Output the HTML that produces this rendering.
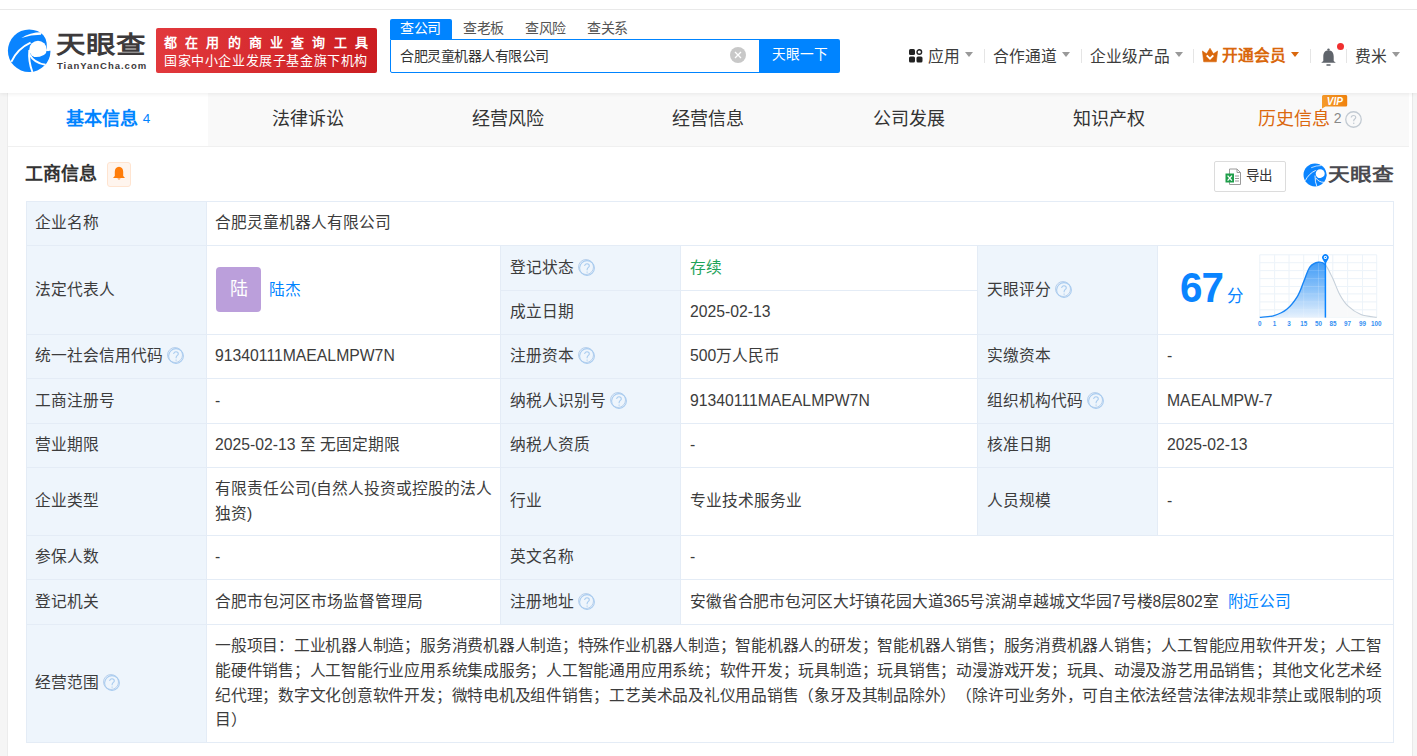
<!DOCTYPE html>
<html lang="zh-CN"><head><meta charset="utf-8">
<style>
*{margin:0;padding:0;box-sizing:border-box}
html,body{width:1417px;height:756px;overflow:hidden;background:#f5f5f5;font-family:"Liberation Sans",sans-serif;color:#333}
.abs{position:absolute}
#top{position:absolute;left:0;top:0;width:1417px;height:10px;background:#fff;border-bottom:1px solid #e9e9e9;z-index:3}
#hdr{position:absolute;left:0;top:10px;width:1417px;height:83px;background:#fff;box-shadow:0 1px 4px rgba(0,0,0,.07);z-index:2}
#card{position:absolute;left:8px;top:93px;width:1404px;height:663px;background:#fff}
#rstrip{position:absolute;left:1412px;top:93px;width:1px;height:663px;background:#e9e9e9}
.tabs{position:absolute;left:0;top:0;width:1401px;height:53px;background:#f9f9f9}
.tab{position:absolute;top:0;height:53px;width:200.14px;text-align:center;font-size:18px;line-height:53px;color:#333}
.tab.on{background:#fff;color:#0084ff;font-weight:bold}
table{position:absolute;left:18px;top:108px;border-collapse:collapse;table-layout:fixed;width:1368px}
td{border:1px solid #e4ecf6;font-size:15.75px;padding:0 10px;vertical-align:middle;color:#333;line-height:24.75px}
td.l{background:#eef5fc}
.q{display:inline-block;width:16px;height:16px;border:1.3px solid #b8d0ec;border-radius:50%;color:#b8d0ec;font-size:12px;line-height:13px;text-align:center;vertical-align:-2px;margin-left:6px;font-family:"Liberation Sans",sans-serif}
.tri{display:inline-block;width:0;height:0;border-left:4.5px solid transparent;border-right:4.5px solid transparent;border-top:5px solid #999;vertical-align:4.5px;margin-left:4.5px}
.nav{position:absolute;top:45px;font-size:15.75px;line-height:20px;color:#3c3c3c;white-space:nowrap}
.div{position:absolute;top:49px;width:1px;height:14px;background:#e5e5e5}
.cell{position:absolute;border:1px solid #e4ecf6;display:flex;align-items:center;padding-left:8px;font-size:15.75px;line-height:24.75px;color:#3c3c3c;white-space:nowrap;text-spacing-trim:space-all}
.cell.l{background:#eef5fc}
.q{display:inline-block;width:16px;height:16px;margin-left:4px;position:relative;top:-1.5px}
.q svg{display:block}
.av{display:inline-block;position:relative;top:-1px;margin-left:1px;width:45px;height:45px;border-radius:4px;background:#bb9fdb;color:#fff;font-size:18px;line-height:45px;text-align:center}
</style></head><body>
<div id="top"></div>
<div id="hdr">
  <!-- logo -->
  <svg class="abs" style="left:5px;top:17px" width="48" height="48" viewBox="0 0 48 48">
    <circle cx="24.2" cy="23.8" r="21.3" fill="#0a84ff"/>
    <circle cx="33" cy="22.4" r="8.7" fill="#fff"/>
    <path d="M34.5,4.6 A22.2,22.2 0 0 1 46.8,22.6 L46,24.3 L41,24 L41.8,21.6 Q42.8,10.5 34.5,4.6Z" fill="#fff"/>
    <path d="M27,29.5 Q36,32.2 45.2,23.2 Q45.3,32 40.2,35 Q32,37.5 27,29.5Z" fill="#0a84ff"/>
    <path d="M6.3,34.8 Q12.5,21.5 25.6,15.6" stroke="#fff" stroke-width="1.9" fill="none"/>
    <path d="M16.3,10.9 Q25,5.2 36.5,5.2 L36,7.8 Q26,7.9 16.3,10.9Z" fill="#fff"/>
    <path d="M24.3,23 Q23.2,34 27.4,45" stroke="#fff" stroke-width="1.9" fill="none"/>
    <path d="M24.6,27.5 Q29,36 40.5,37.8" stroke="#fff" stroke-width="1.9" fill="none"/>
  </svg>
  <div class="abs" style="left:56px;top:16px;font-size:29px;line-height:32px;font-weight:bold;color:#3d3a3b;letter-spacing:0.6px;transform-origin:0 29px;transform:scale(1.02,0.83)">天眼查</div>
  <div class="abs" style="left:57px;top:50px;font-size:9.5px;line-height:10px;font-weight:bold;color:#3d3a3b;letter-spacing:0.98px;top:50.5px">TianYanCha.com</div>
  <!-- red banner -->
  <div class="abs" style="left:156px;top:18px;width:221px;height:44.5px;border-radius:2px;background:linear-gradient(90deg,#e2393d,#cb1d21)"></div>
  <div class="abs" style="left:164px;top:25px;font-size:13px;line-height:16px;color:#fff;font-weight:bold;letter-spacing:8.2px;white-space:nowrap">都在用的商业查询工具</div>
  <div class="abs" style="left:164px;top:43px;font-size:13px;line-height:16px;color:#fff;letter-spacing:0.6px;white-space:nowrap">国家中小企业发展子基金旗下机构</div>
  <!-- search -->
  <div class="abs" style="left:390px;top:9px;width:62px;height:20px;background:#0084ff;border-radius:2px 2px 0 0"></div>
  <div class="abs" style="left:400px;top:9px;font-size:14px;letter-spacing:-0.5px;line-height:18px;color:#fff">查公司</div>
  <div class="abs" style="left:463px;top:9px;font-size:14px;letter-spacing:-0.5px;line-height:18px;color:#555">查老板</div>
  <div class="abs" style="left:525px;top:9px;font-size:14px;letter-spacing:-0.5px;line-height:18px;color:#555">查风险</div>
  <div class="abs" style="left:587px;top:9px;font-size:14px;letter-spacing:-0.5px;line-height:18px;color:#555">查关系</div>
  <div class="abs" style="left:390px;top:29px;width:372px;height:33.5px;border:1px solid #0084ff;border-radius:0 0 0 2px;background:#fff"></div>
  <div class="abs" style="left:400px;top:36px;font-size:14px;letter-spacing:-0.5px;line-height:20px;color:#333">合肥灵童机器人有限公司</div>
  <div class="abs" style="left:730px;top:37px;width:16px;height:16px;border-radius:50%;background:#c8c8c8"></div>
  <svg class="abs" style="left:730px;top:37px" width="16" height="16" viewBox="0 0 16 16"><path d="M5,5L11,11M11,5L5,11" stroke="#fff" stroke-width="1.3"/></svg>
  <div class="abs" style="left:759px;top:29px;width:81px;height:33.5px;background:#0084ff;border-radius:0 2px 2px 0"></div>
  <div class="abs" style="left:772px;top:35px;font-size:13.7px;line-height:20px;color:#fff">天眼一下</div>
  <!-- right nav -->
  <svg class="abs" style="left:909px;top:39px" width="14" height="14" viewBox="0 0 14 14">
    <rect x="0" y="0" width="6" height="6" rx="1.5" fill="#222"/>
    <circle cx="10.3" cy="3" r="2.3" fill="none" stroke="#222" stroke-width="1.4"/>
    <rect x="0" y="7.5" width="6" height="6" rx="1.5" fill="#222"/>
    <rect x="7.5" y="7.5" width="6" height="6" rx="1.5" fill="#222"/>
  </svg>
  <div class="nav" style="left:928px;top:36.5px">应用<span class="tri"></span></div>
  <div class="div" style="left:984px;top:39px"></div>
  <div class="nav" style="left:993px;top:36.5px">合作通道<span class="tri"></span></div>
  <div class="div" style="left:1081px;top:39px"></div>
  <div class="nav" style="left:1090px;top:36.5px">企业级产品<span class="tri"></span></div>
  <div class="div" style="left:1193px;top:39px"></div>
  <svg class="abs" style="left:1202px;top:38px;z-index:1" width="16" height="15" viewBox="0 0 16 15">
    <path d="M0.4,3 L4.6,5.8 L8,0.3 L11.4,5.8 L15.6,3 L14.3,13.8 L1.7,13.8Z" fill="#d9670c" stroke="#d9670c" stroke-width="0.6" stroke-linejoin="round"/>
    <path d="M4.7,7.3 L8,10.7 L11.3,7.3" stroke="#fff" stroke-width="1.9" fill="none"/>
  </svg>
  <div class="nav" style="left:1222px;top:35.5px;color:#d9670c;font-weight:bold">开通会员<span class="tri" style="border-top-color:#d9670c;vertical-align:3.8px"></span></div>
  <div class="div" style="left:1310px;top:39px"></div>
  <svg class="abs" style="left:1320px;top:38px" width="17" height="19" viewBox="0 0 17 19">
    <circle cx="8.5" cy="1.6" r="1.2" fill="#5f646b"/>
    <path d="M8.5,2.2 C5,2.2 3.3,5 3.3,8.5 L3.3,13 L1.2,14.8 L15.8,14.8 L13.7,13 L13.7,8.5 C13.7,5 12,2.2 8.5,2.2Z" fill="#5f646b"/>
    <rect x="6.3" y="16.3" width="4.4" height="1.4" rx=".6" fill="#5f646b"/>
  </svg>
  <div class="abs" style="left:1337px;top:32.5px;width:7px;height:7px;border-radius:50%;background:#f02f2f"></div>
  <div class="div" style="left:1346px;top:39px"></div>
  <div class="nav" style="left:1355px;top:36.5px">费米<span class="tri"></span></div>
</div>

<div id="card">
  <div class="abs" style="left:0;top:53px;width:1401px;height:1px;background:#f0f0f0"></div>
  <div class="tabs">
    <div class="tab on" style="left:0">基本信息 <span style="font-weight:normal;font-size:13.5px;position:relative;top:-2px">4</span></div>
    <div class="tab" style="left:200.14px">法律诉讼</div>
    <div class="tab" style="left:400.28px">经营风险</div>
    <div class="tab" style="left:600.42px">经营信息</div>
    <div class="tab" style="left:800.56px">公司发展</div>
    <div class="tab" style="left:1000.70px">知识产权</div>
    <div class="tab" style="left:1200.84px;color:#db680e;text-align:left;padding-left:49px">历史信息<span style="font-size:14px;color:#888;margin-left:4px;position:relative;top:-2px">2</span></div>
  </div>
</div>
<div id="rstrip"></div>
<div class="abs" style="left:7px;top:93px;width:1px;height:663px;background:#ececec"></div>
<svg class="abs" style="left:1345px;top:111px;z-index:3" width="17" height="17" viewBox="0 0 16 16"><circle cx="8" cy="8" r="7.3" fill="none" stroke="#c2cad2" stroke-width="1.2"/><path d="M5.9,6.2 C5.9,4.9 6.8,4.2 8,4.2 C9.2,4.2 10.1,5 10.1,6.1 C10.1,7.4 8.2,7.6 8.2,9.1 L8.2,9.7" fill="none" stroke="#c2cad2" stroke-width="1.1"/><circle cx="8.2" cy="11.6" r=".75" fill="#c2cad2"/></svg>

<!-- section heading -->
<div class="abs" style="left:25px;top:162px;font-size:18px;line-height:24px;font-weight:bold;color:#333">工商信息</div>
<div class="abs" style="left:107px;top:162px;width:24px;height:25px;border:1px solid #ffe4d0;border-radius:3px;background:#fff5ee"></div>
<svg class="abs" style="left:112px;top:166px" width="14" height="15" viewBox="0 0 14 15">
  <path d="M7,0.8 C4.3,0.8 2.8,3 2.8,5.8 L2.8,10 L1,12 L13,12 L11.2,10 L11.2,5.8 C11.2,3 9.7,0.8 7,0.8Z" fill="#ff7d0a"/>
  <path d="M5.3,12.5 Q7,14.6 8.7,12.5Z" fill="#ff7d0a"/>
</svg>
<!-- export -->
<div class="abs" style="left:1214px;top:161px;width:72px;height:31px;border:1px solid #dcdcdc;border-radius:2px;background:#fff"></div>
<svg class="abs" style="left:1225px;top:168px" width="17" height="18" viewBox="0 0 17 18">
  <path d="M4.5,1 L12,1 L15.5,4.5 L15.5,16.5 L4.5,16.5Z" fill="#fff" stroke="#9a9a9a" stroke-width="1"/>
  <path d="M12,1 L12,4.5 L15.5,4.5" fill="none" stroke="#9a9a9a" stroke-width="1"/>
  <path d="M10,8 L14,8 M10,10.5 L14,10.5 M10,13 L14,13" stroke="#9a9a9a" stroke-width="1"/>
  <rect x="0.5" y="5.5" width="8.5" height="9" fill="#1e9e4a"/>
  <path d="M2.6,7.6 L6.9,12.6 M6.9,7.6 L2.6,12.6" stroke="#fff" stroke-width="1.3"/>
</svg>
<div class="abs" style="left:1246px;top:166px;font-size:13.5px;line-height:20px;color:#333">导出</div>
<!-- small logo -->
<svg class="abs" style="left:1302px;top:161.5px" width="26" height="26" viewBox="0 0 48 48">
    <circle cx="24" cy="23.8" r="21.2" fill="#0a84ff"/>
    <circle cx="33.6" cy="21.6" r="8.3" fill="#fff"/>
    <path d="M27.3,29.2 Q35.5,31.5 44.8,22.5 L45.3,24 Q44,33 36,35.5 Q30,35.5 27.3,29.2Z" fill="#0a84ff"/>
    <path d="M6,34.6 Q12.7,21 25.4,15.5" stroke="#fff" stroke-width="1.6" fill="none"/>
    <path d="M17,10.5 Q26,6.5 35.5,6.5" stroke="#fff" stroke-width="1.3" fill="none"/>
    <path d="M24,25 Q24,38 27.5,45" stroke="#fff" stroke-width="1.6" fill="none"/>
    <path d="M25.5,29.5 Q31,37.5 40.5,37.5" stroke="#fff" stroke-width="1.6" fill="none"/>
</svg>
<div class="abs" style="left:1328px;top:158px;font-size:21.5px;line-height:30px;font-weight:bold;color:#4a4a4f;transform-origin:0 25px;transform:scale(1.01,0.82)">天眼查</div>
<!-- VIP badge -->
<svg class="abs" style="left:1321px;top:94px" width="27" height="15" viewBox="0 0 27 15">
  <defs><linearGradient id="vg" x1="0" y1="0" x2="1" y2="0"><stop offset="0" stop-color="#f59a2a"/><stop offset="1" stop-color="#f0820e"/></linearGradient></defs>
  <path d="M2.5,1 L25,1 Q26.2,1 26.2,2.5 L26.2,11 Q26.2,12.5 25,12.5 L4.5,12.5 L1,14.5 L1,2.5 Q1,1 2.5,1Z" fill="url(#vg)"/>
  <text x="13.8" y="10.6" text-anchor="middle" font-family="Liberation Sans" font-size="10" font-weight="bold" font-style="italic" fill="#fff">VIP</text>
</svg>
<div class="cell l" style="left:26px;top:201px;width:181px;height:45px">企业名称</div>
<div class="cell" style="left:206px;top:201px;width:1188px;height:45px">合肥灵童机器人有限公司</div>
<div class="cell l" style="left:26px;top:245px;width:181px;height:90px">法定代表人</div>
<div class="cell" style="left:206px;top:245px;width:295px;height:90px"><span class="av">陆</span><span style="color:#0084ff;margin-left:7.5px">陆杰</span></div>
<div class="cell l" style="left:500px;top:245px;width:181px;height:46px;padding-left:9px">登记状态<span class="q"><svg width="16" height="16" viewBox="0 0 16 16"><circle cx="8" cy="8" r="7.4" fill="none" stroke="#a8cbef" stroke-width="1.05"/><path d="M5.7,6.1 C5.7,4.6 6.8,3.8 8,3.8 C9.3,3.8 10.3,4.7 10.3,5.9 C10.3,7.3 8.1,7.7 8.1,9.5 L8.1,10.3" fill="none" stroke="#a8cbef" stroke-width="1.05"/><circle cx="8.1" cy="12.1" r=".7" fill="#a8cbef"/></svg></span></div>
<div class="cell" style="left:680px;top:245px;width:298px;height:46px;padding-left:9px"><span style="color:#1fa35a">存续</span></div>
<div class="cell l" style="left:500px;top:290px;width:181px;height:45px;padding-left:9px">成立日期</div>
<div class="cell" style="left:680px;top:290px;width:298px;height:45px;padding-left:9px">2025-02-13</div>
<div class="cell l" style="left:977px;top:245px;width:181px;height:90px;padding-left:9px">天眼评分<span class="q"><svg width="16" height="16" viewBox="0 0 16 16"><circle cx="8" cy="8" r="7.4" fill="none" stroke="#a8cbef" stroke-width="1.05"/><path d="M5.7,6.1 C5.7,4.6 6.8,3.8 8,3.8 C9.3,3.8 10.3,4.7 10.3,5.9 C10.3,7.3 8.1,7.7 8.1,9.5 L8.1,10.3" fill="none" stroke="#a8cbef" stroke-width="1.05"/><circle cx="8.1" cy="12.1" r=".7" fill="#a8cbef"/></svg></span></div>
<div class="cell" style="left:1157px;top:245px;width:237px;height:90px;padding-left:9px"></div>
<div class="cell l" style="left:26px;top:334px;width:181px;height:45px">统一社会信用代码<span class="q"><svg width="16" height="16" viewBox="0 0 16 16"><circle cx="8" cy="8" r="7.4" fill="none" stroke="#a8cbef" stroke-width="1.05"/><path d="M5.7,6.1 C5.7,4.6 6.8,3.8 8,3.8 C9.3,3.8 10.3,4.7 10.3,5.9 C10.3,7.3 8.1,7.7 8.1,9.5 L8.1,10.3" fill="none" stroke="#a8cbef" stroke-width="1.05"/><circle cx="8.1" cy="12.1" r=".7" fill="#a8cbef"/></svg></span></div>
<div class="cell" style="left:206px;top:334px;width:295px;height:45px">91340111MAEALMPW7N</div>
<div class="cell l" style="left:500px;top:334px;width:181px;height:45px;padding-left:9px">注册资本<span class="q"><svg width="16" height="16" viewBox="0 0 16 16"><circle cx="8" cy="8" r="7.4" fill="none" stroke="#a8cbef" stroke-width="1.05"/><path d="M5.7,6.1 C5.7,4.6 6.8,3.8 8,3.8 C9.3,3.8 10.3,4.7 10.3,5.9 C10.3,7.3 8.1,7.7 8.1,9.5 L8.1,10.3" fill="none" stroke="#a8cbef" stroke-width="1.05"/><circle cx="8.1" cy="12.1" r=".7" fill="#a8cbef"/></svg></span></div>
<div class="cell" style="left:680px;top:334px;width:298px;height:45px;padding-left:9px">500万人民币</div>
<div class="cell l" style="left:977px;top:334px;width:181px;height:45px;padding-left:9px">实缴资本</div>
<div class="cell" style="left:1157px;top:334px;width:237px;height:45px;padding-left:9px">-</div>
<div class="cell l" style="left:26px;top:378px;width:181px;height:46px">工商注册号</div>
<div class="cell" style="left:206px;top:378px;width:295px;height:46px">-</div>
<div class="cell l" style="left:500px;top:378px;width:181px;height:46px;padding-left:9px">纳税人识别号<span class="q"><svg width="16" height="16" viewBox="0 0 16 16"><circle cx="8" cy="8" r="7.4" fill="none" stroke="#a8cbef" stroke-width="1.05"/><path d="M5.7,6.1 C5.7,4.6 6.8,3.8 8,3.8 C9.3,3.8 10.3,4.7 10.3,5.9 C10.3,7.3 8.1,7.7 8.1,9.5 L8.1,10.3" fill="none" stroke="#a8cbef" stroke-width="1.05"/><circle cx="8.1" cy="12.1" r=".7" fill="#a8cbef"/></svg></span></div>
<div class="cell" style="left:680px;top:378px;width:298px;height:46px;padding-left:9px">91340111MAEALMPW7N</div>
<div class="cell l" style="left:977px;top:378px;width:181px;height:46px;padding-left:9px">组织机构代码<span class="q"><svg width="16" height="16" viewBox="0 0 16 16"><circle cx="8" cy="8" r="7.4" fill="none" stroke="#a8cbef" stroke-width="1.05"/><path d="M5.7,6.1 C5.7,4.6 6.8,3.8 8,3.8 C9.3,3.8 10.3,4.7 10.3,5.9 C10.3,7.3 8.1,7.7 8.1,9.5 L8.1,10.3" fill="none" stroke="#a8cbef" stroke-width="1.05"/><circle cx="8.1" cy="12.1" r=".7" fill="#a8cbef"/></svg></span></div>
<div class="cell" style="left:1157px;top:378px;width:237px;height:46px;padding-left:9px">MAEALMPW-7</div>
<div class="cell l" style="left:26px;top:423px;width:181px;height:45px">营业期限</div>
<div class="cell" style="left:206px;top:423px;width:295px;height:45px">2025-02-13 至 无固定期限</div>
<div class="cell l" style="left:500px;top:423px;width:181px;height:45px;padding-left:9px">纳税人资质</div>
<div class="cell" style="left:680px;top:423px;width:298px;height:45px;padding-left:9px">-</div>
<div class="cell l" style="left:977px;top:423px;width:181px;height:45px;padding-left:9px">核准日期</div>
<div class="cell" style="left:1157px;top:423px;width:237px;height:45px;padding-left:9px">2025-02-13</div>
<div class="cell l" style="left:26px;top:467px;width:181px;height:69px">企业类型</div>
<div class="cell" style="left:206px;top:467px;width:295px;height:69px"><span>有限责任公司(自然人投资或控股的法人<br>独资)</span></div>
<div class="cell l" style="left:500px;top:467px;width:181px;height:69px;padding-left:9px">行业</div>
<div class="cell" style="left:680px;top:467px;width:298px;height:69px;padding-left:9px">专业技术服务业</div>
<div class="cell l" style="left:977px;top:467px;width:181px;height:69px;padding-left:9px">人员规模</div>
<div class="cell" style="left:1157px;top:467px;width:237px;height:69px;padding-left:9px">-</div>
<div class="cell l" style="left:26px;top:535px;width:181px;height:45px">参保人数</div>
<div class="cell" style="left:206px;top:535px;width:295px;height:45px">-</div>
<div class="cell l" style="left:500px;top:535px;width:181px;height:45px;padding-left:9px">英文名称</div>
<div class="cell" style="left:680px;top:535px;width:714px;height:45px;padding-left:9px">-</div>
<div class="cell l" style="left:26px;top:579px;width:181px;height:46px">登记机关</div>
<div class="cell" style="left:206px;top:579px;width:295px;height:46px">合肥市包河区市场监督管理局</div>
<div class="cell l" style="left:500px;top:579px;width:181px;height:46px;padding-left:9px">注册地址<span class="q"><svg width="16" height="16" viewBox="0 0 16 16"><circle cx="8" cy="8" r="7.4" fill="none" stroke="#a8cbef" stroke-width="1.05"/><path d="M5.7,6.1 C5.7,4.6 6.8,3.8 8,3.8 C9.3,3.8 10.3,4.7 10.3,5.9 C10.3,7.3 8.1,7.7 8.1,9.5 L8.1,10.3" fill="none" stroke="#a8cbef" stroke-width="1.05"/><circle cx="8.1" cy="12.1" r=".7" fill="#a8cbef"/></svg></span></div>
<div class="cell" style="left:680px;top:579px;width:714px;height:46px;padding-left:9px"><span style="letter-spacing:-0.15px">安徽省合肥市包河区大圩镇花园大道365号滨湖卓越城文华园7号楼8层802室</span><span style="color:#0084ff;margin-left:9px;letter-spacing:-0.25px">附近公司</span></div>
<div class="cell l" style="left:26px;top:624px;width:181px;height:119px">经营范围<span class="q"><svg width="16" height="16" viewBox="0 0 16 16"><circle cx="8" cy="8" r="7.4" fill="none" stroke="#a8cbef" stroke-width="1.05"/><path d="M5.7,6.1 C5.7,4.6 6.8,3.8 8,3.8 C9.3,3.8 10.3,4.7 10.3,5.9 C10.3,7.3 8.1,7.7 8.1,9.5 L8.1,10.3" fill="none" stroke="#a8cbef" stroke-width="1.05"/><circle cx="8.1" cy="12.1" r=".7" fill="#a8cbef"/></svg></span></div>
<div class="cell" style="left:206px;top:624px;width:1188px;height:119px"><span style="letter-spacing:-0.23px">一般项目：工业机器人制造；服务消费机器人制造；特殊作业机器人制造；智能机器人的研发；智能机器人销售；服务消费机器人销售；人工智能应用软件开发；人工智<br>能硬件销售；人工智能行业应用系统集成服务；人工智能通用应用系统；软件开发；玩具制造；玩具销售；动漫游戏开发；玩具、动漫及游艺用品销售；其他文化艺术经<br>纪代理；数字文化创意软件开发；微特电机及组件销售；工艺美术品及礼仪用品销售（象牙及其制品除外）（除许可业务外，可自主依法经营法律法规非禁止或限制的项<br>目）</span></div>
<svg class="abs" style="left:1255px;top:250px" width="130" height="80" viewBox="0 0 130 80">
<defs><linearGradient id="sg" x1="0" y1="0" x2="0" y2="1"><stop offset="0" stop-color="#3f9bf7"/><stop offset="0.5" stop-color="#8cc3f9"/><stop offset="1" stop-color="#e6f1fd"/></linearGradient></defs>
<g stroke="#e8f0f8" stroke-width="0.9"><line x1="4.8" y1="4.8" x2="4.8" y2="67.4"/><line x1="19.6" y1="4.8" x2="19.6" y2="67.4"/><line x1="34.1" y1="4.8" x2="34.1" y2="67.4"/><line x1="48.7" y1="4.8" x2="48.7" y2="67.4"/><line x1="63.5" y1="4.8" x2="63.5" y2="67.4"/><line x1="77.8" y1="4.8" x2="77.8" y2="67.4"/><line x1="92.6" y1="4.8" x2="92.6" y2="67.4"/><line x1="107.5" y1="4.8" x2="107.5" y2="67.4"/><line x1="121.7" y1="4.8" x2="121.7" y2="67.4"/><line x1="4.8" y1="4.8" x2="121.7" y2="4.8"/><line x1="4.8" y1="12.7" x2="121.7" y2="12.7"/><line x1="4.8" y1="20.6" x2="121.7" y2="20.6"/><line x1="4.8" y1="28.6" x2="121.7" y2="28.6"/><line x1="4.8" y1="36.5" x2="121.7" y2="36.5"/><line x1="4.8" y1="43.9" x2="121.7" y2="43.9"/><line x1="4.8" y1="51.9" x2="121.7" y2="51.9"/><line x1="4.8" y1="59.8" x2="121.7" y2="59.8"/><line x1="4.8" y1="67.4" x2="121.7" y2="67.4"/></g>
<path d="M4.8,67.4 C7.18,67.10 14.60,66.95 19.1,65.6 C23.60,64.25 27.93,62.47 31.8,59.3 C35.67,56.13 39.48,51.18 42.3,46.6 C45.12,42.02 46.58,36.75 48.7,31.8 C50.82,26.85 52.53,20.17 55,16.9 C57.47,13.63 60.93,12.55 63.5,12.2 C66.07,11.85 68.02,12.07 70.4,14.8 L70.4,67.4 Z" fill="url(#sg)"/>
<path d="M70.4,14.8 C72.78,17.53 75.42,23.65 77.8,28.6 C80.18,33.55 82.23,40.00 84.7,44.5 C87.17,49.00 89.07,52.25 92.6,55.6 C96.13,58.95 101.05,62.63 105.9,64.6 C110.75,66.57 119.07,66.93 121.7,67.4 L70.4,67.4 Z" fill="#f8f9fa"/>
<g stroke="#ffffff" stroke-opacity="0.18" stroke-width="0.9"><line x1="4.8" y1="4.8" x2="4.8" y2="67.4"/><line x1="19.6" y1="4.8" x2="19.6" y2="67.4"/><line x1="34.1" y1="4.8" x2="34.1" y2="67.4"/><line x1="48.7" y1="4.8" x2="48.7" y2="67.4"/><line x1="63.5" y1="4.8" x2="63.5" y2="67.4"/><line x1="77.8" y1="4.8" x2="77.8" y2="67.4"/><line x1="92.6" y1="4.8" x2="92.6" y2="67.4"/><line x1="107.5" y1="4.8" x2="107.5" y2="67.4"/><line x1="121.7" y1="4.8" x2="121.7" y2="67.4"/><line x1="4.8" y1="4.8" x2="121.7" y2="4.8"/><line x1="4.8" y1="12.7" x2="121.7" y2="12.7"/><line x1="4.8" y1="20.6" x2="121.7" y2="20.6"/><line x1="4.8" y1="28.6" x2="121.7" y2="28.6"/><line x1="4.8" y1="36.5" x2="121.7" y2="36.5"/><line x1="4.8" y1="43.9" x2="121.7" y2="43.9"/><line x1="4.8" y1="51.9" x2="121.7" y2="51.9"/><line x1="4.8" y1="59.8" x2="121.7" y2="59.8"/><line x1="4.8" y1="67.4" x2="121.7" y2="67.4"/></g>
<path d="M70.4,14.8 C72.78,17.53 75.42,23.65 77.8,28.6 C80.18,33.55 82.23,40.00 84.7,44.5 C87.17,49.00 89.07,52.25 92.6,55.6 C96.13,58.95 101.05,62.63 105.9,64.6 C110.75,66.57 119.07,66.93 121.7,67.4" fill="none" stroke="#c6d0da" stroke-width="1.1"/>
<path d="M4.8,67.4 C7.18,67.10 14.60,66.95 19.1,65.6 C23.60,64.25 27.93,62.47 31.8,59.3 C35.67,56.13 39.48,51.18 42.3,46.6 C45.12,42.02 46.58,36.75 48.7,31.8 C50.82,26.85 52.53,20.17 55,16.9 C57.47,13.63 60.93,12.55 63.5,12.2 C66.07,11.85 68.02,12.07 70.4,14.8" fill="none" stroke="#1885f5" stroke-width="1.4"/>
<line x1="70.4" y1="13" x2="70.4" y2="67.6" stroke="#0a84ff" stroke-width="1.5"/>
<path d="M70.4,14.2 L67.6,9.2 A3.3,3.3 0 1 1 73.2,9.2 Z" fill="#0a84ff"/>
<circle cx="70.4" cy="7.4" r="1.6" fill="#fff"/>
<circle cx="70.4" cy="7.4" r=".7" fill="#0a84ff"/>
<g font-family="Liberation Sans" font-size="6.3" font-weight="bold" fill="#3590f2" text-anchor="middle"><text x="4.8" y="75.6">0</text><text x="19.6" y="75.6">1</text><text x="34.1" y="75.6">3</text><text x="48.7" y="75.6">15</text><text x="63.5" y="75.6">50</text><text x="78.1" y="75.6">85</text><text x="92.6" y="75.6">97</text><text x="107.5" y="75.6">99</text><text x="121.2" y="75.6">100</text></g>
</svg>
<div class="abs" style="left:1180px;top:264px;font-size:42px;line-height:48px;font-weight:bold;color:#0a84ff;letter-spacing:-1px;transform-origin:0 0;transform:scaleX(0.96)">67</div>
<div class="abs" style="left:1227px;top:284.5px;font-size:16.5px;line-height:22px;color:#0a84ff">分</div>

</body></html>
